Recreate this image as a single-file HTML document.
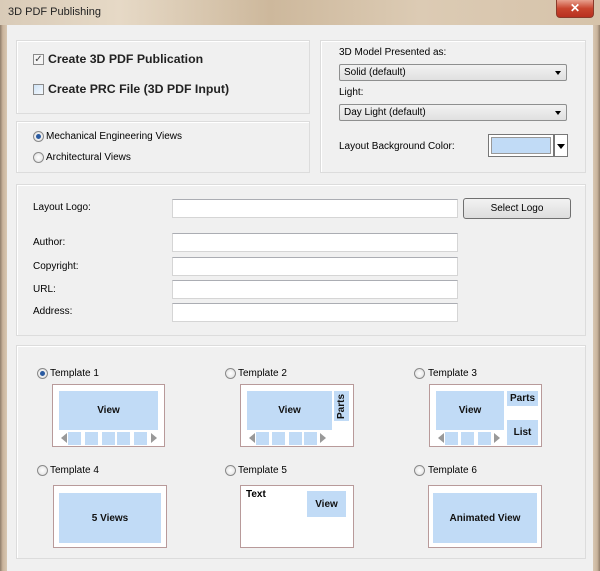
<!DOCTYPE html>
<html><head><style>
*{box-sizing:border-box;margin:0;padding:0}
body{width:600px;height:571px;overflow:hidden;background:#f0f0f0;font-family:"Liberation Sans",sans-serif;font-size:11px;color:#000;position:relative}
.a{position:absolute}
.title{left:0;top:0;width:600px;height:25px;background:linear-gradient(90deg,#d9cbb8,#e6d9c6 20%,#cdb89c 45%,#dccbb4 70%,#d6c3aa);}
.lf{left:0;top:25px;width:7px;height:546px;background:linear-gradient(90deg,#8f7d6a,#c9b49c 40%,#d8c7b2);}
.rf{left:593px;top:25px;width:7px;height:546px;background:linear-gradient(90deg,#d8c7b2,#c9b49c 60%,#8f7d6a);}
.close{left:556px;top:0;width:38px;height:18px;background:linear-gradient(#e8a08e,#c8452e 50%,#b83020);border:1px solid #8a3a2a;border-top:none;border-radius:0 0 4px 4px;color:#fff;font-weight:bold;text-align:center;line-height:16px;font-size:12px}
.panel{border:1px solid #dcdcdc;background:#f0f0f0;box-shadow:inset 1px 1px 0 #fff}
.inp{background:#fff;border:1px solid #d5d5d5;border-top-color:#abadb3;height:19px;left:172px;width:286px}
.sel{border:1px solid #8e8f8f;border-radius:2px;background:linear-gradient(#f2f2f2,#e0e0e0);height:17px;left:339px;width:228px;padding:2px 4px;font-size:10px}
.sel:after{content:"";position:absolute;right:5px;top:6px;border:3.5px solid transparent;border-top:4px solid #000}
.rad{width:11px;height:11px;border-radius:50%;border:1px solid #8a8a8a;background:radial-gradient(#fff,#dcdcdc)}
.rad.on:after{content:"";position:absolute;left:2px;top:2px;width:5px;height:5px;border-radius:50%;background:#2a5aa0}
.box{border:1px solid #b89a9a;background:#fff}
.bl{background:#c1dbf6;font-weight:bold;font-size:10px;display:flex;align-items:center;justify-content:center;color:#111}
.th{width:13px;height:13px;background:#c1dbf6;top:47px}
.la{top:48px;border:5px solid transparent;border-right:6px solid #999;width:0;height:0}
.ra{top:48px;border:5px solid transparent;border-left:6px solid #999;width:0;height:0}
</style></head><body>
<div class="a title"></div>
<div class="a" style="left:8px;top:6px;font-size:11px;color:#222">3D PDF Publishing</div>
<div class="a close">✕</div>
<div class="a lf"></div><div class="a rf"></div>

<div class="a panel" style="left:16px;top:40px;width:294px;height:74px"></div>
<div class="a panel" style="left:16px;top:121px;width:294px;height:52px"></div>
<div class="a panel" style="left:320px;top:40px;width:266px;height:133px"></div>
<div class="a panel" style="left:16px;top:184px;width:570px;height:152px"></div>
<div class="a panel" style="left:16px;top:345px;width:570px;height:214px"></div>

<div class="a" style="left:33px;top:54px;width:11px;height:11px;border:1px solid #8a8a8a;background:#f4f4f4;font-size:10px;line-height:9px;text-align:center;color:#444">✓</div>
<div class="a" style="left:48px;top:52px;font-size:12.3px;font-weight:bold;color:#222">Create 3D PDF Publication</div>
<div class="a" style="left:33px;top:84px;width:11px;height:11px;border:1px solid #8a8a8a;background:linear-gradient(135deg,#cfe3f6,#f4f8fc)"></div>
<div class="a" style="left:48px;top:82px;font-size:12.3px;font-weight:bold;color:#222">Create PRC File (3D PDF Input)</div>

<div class="a rad on" style="left:33px;top:131px"></div><div class="a" style="left:46px;top:131px;font-size:10px">Mechanical Engineering Views</div>
<div class="a rad" style="left:33px;top:152px"></div><div class="a" style="left:46px;top:152px;font-size:10px">Architectural Views</div>

<div class="a" style="left:339px;top:47px;font-size:10px">3D Model Presented as:</div>
<div class="a sel" style="top:64px">Solid (default)</div>
<div class="a" style="left:339px;top:87px;font-size:10px">Light:</div>
<div class="a sel" style="top:104px">Day Light (default)</div>
<div class="a" style="left:339px;top:141px;font-size:10px">Layout Background Color:</div>
<div class="a" style="left:488px;top:134px;width:66px;height:23px;border:1px solid #777;background:#fff;padding:2px"><div style="width:100%;height:100%;background:#c1dbf6;border:1px solid #999"></div></div>
<div class="a" style="left:554px;top:134px;width:14px;height:23px;border:1px solid #777;background:#fff"><div class="a" style="left:2px;top:9px;border:4px solid transparent;border-top:5px solid #000"></div></div>

<div class="a" style="left:33px;top:202px;font-size:10px">Layout Logo:</div>
<div class="a inp" style="top:199px"></div>
<div class="a" style="left:463px;top:198px;width:108px;height:21px;border:1px solid #707070;border-radius:3px;background:linear-gradient(#f2f2f2,#dddddd);text-align:center;line-height:19px;font-size:10px">Select Logo</div>
<div class="a" style="left:33px;top:237px;font-size:10px">Author:</div><div class="a inp" style="top:233px"></div>
<div class="a" style="left:33px;top:261px;font-size:10px">Copyright:</div><div class="a inp" style="top:257px"></div>
<div class="a" style="left:33px;top:284px;font-size:10px">URL:</div><div class="a inp" style="top:280px"></div>
<div class="a" style="left:33px;top:306px;font-size:10px">Address:</div><div class="a inp" style="top:303px"></div>

<div class="a rad on" style="left:37px;top:368px"></div><div class="a" style="left:50px;top:368px;font-size:10px">Template 1</div>
<div class="a rad" style="left:225px;top:368px"></div><div class="a" style="left:238px;top:368px;font-size:10px">Template 2</div>
<div class="a rad" style="left:414px;top:368px"></div><div class="a" style="left:428px;top:368px;font-size:10px">Template 3</div>
<div class="a rad" style="left:37px;top:465px"></div><div class="a" style="left:50px;top:465px;font-size:10px">Template 4</div>
<div class="a rad" style="left:225px;top:465px"></div><div class="a" style="left:238px;top:465px;font-size:10px">Template 5</div>
<div class="a rad" style="left:414px;top:465px"></div><div class="a" style="left:428px;top:465px;font-size:10px">Template 6</div>

<div class="a box" style="left:52px;top:384px;width:113px;height:63px">
<div class="a bl" style="left:6px;top:6px;width:99px;height:39px">View</div>
<div class="a la" style="left:3px"></div>
<div class="a th" style="left:15px"></div><div class="a th" style="left:32px"></div><div class="a th" style="left:49px"></div><div class="a th" style="left:64px"></div><div class="a th" style="left:81px"></div>
<div class="a ra" style="left:98px"></div>
</div>
<div class="a box" style="left:240px;top:384px;width:114px;height:63px">
<div class="a bl" style="left:6px;top:6px;width:85px;height:39px">View</div>
<div class="a bl" style="left:93px;top:6px;width:15px;height:30px"><span style="transform:rotate(-90deg)">Parts</span></div>
<div class="a la" style="left:3px"></div>
<div class="a th" style="left:15px"></div><div class="a th" style="left:31px"></div><div class="a th" style="left:48px"></div><div class="a th" style="left:63px"></div>
<div class="a ra" style="left:79px"></div>
</div>
<div class="a box" style="left:429px;top:384px;width:113px;height:63px">
<div class="a bl" style="left:6px;top:6px;width:68px;height:39px">View</div>
<div class="a bl" style="left:77px;top:6px;width:31px;height:15px">Parts</div>
<div class="a bl" style="left:77px;top:35px;width:31px;height:25px">List</div>
<div class="a la" style="left:3px"></div>
<div class="a th" style="left:15px"></div><div class="a th" style="left:31px"></div><div class="a th" style="left:48px"></div>
<div class="a ra" style="left:64px"></div>
</div>
<div class="a box" style="left:53px;top:485px;width:114px;height:63px">
<div class="a bl" style="left:5px;top:7px;width:102px;height:50px">5 Views</div>
</div>
<div class="a box" style="left:240px;top:485px;width:114px;height:63px">
<div class="a" style="left:5px;top:3px;font-weight:bold;font-size:10px">Text</div>
<div class="a bl" style="left:66px;top:5px;width:39px;height:26px">View</div>
</div>
<div class="a box" style="left:428px;top:485px;width:114px;height:63px">
<div class="a bl" style="left:4px;top:7px;width:104px;height:50px">Animated View</div>
</div>
</body></html>
